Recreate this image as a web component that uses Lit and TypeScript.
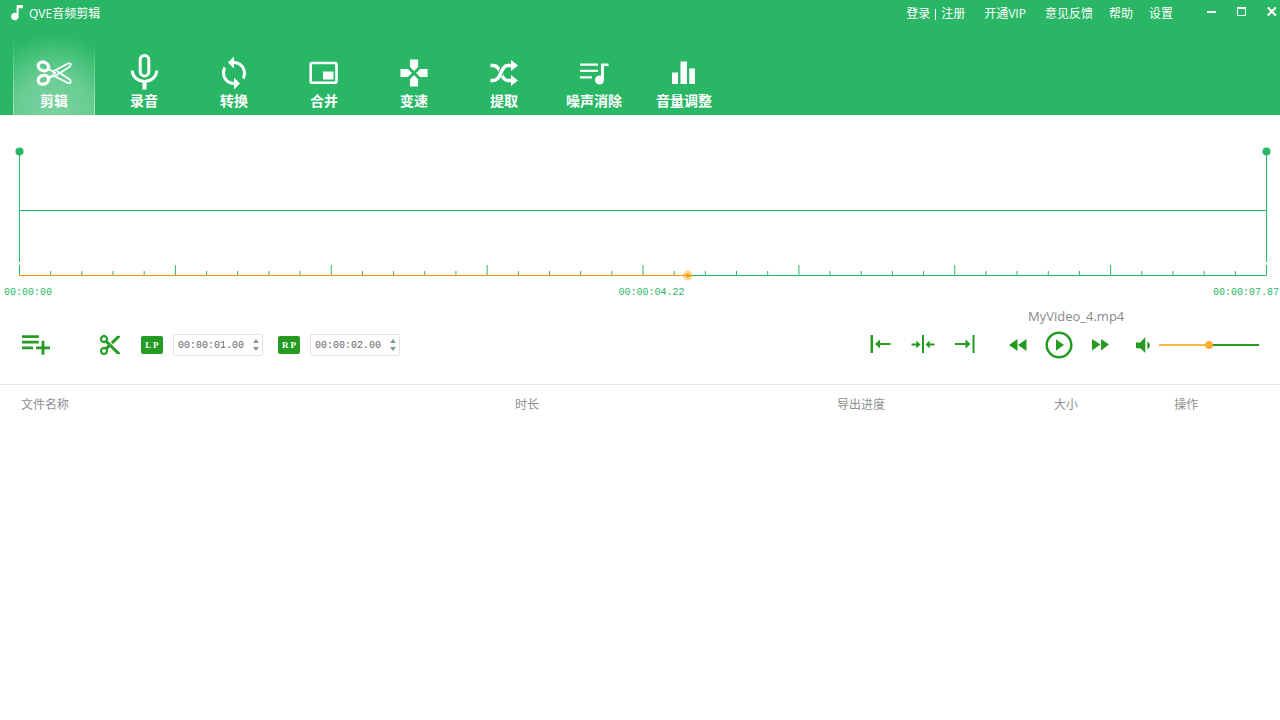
import { LitElement, html, css, svg } from "lit";
import { customElement, state } from "lit/decorators.js";

const icons = {
  note: svg`<path d="M5.6 0H12v3.2H7.6v8.2A3.8 3.8 0 1 1 5.6 8.2z"/>`,
  scissors: svg`
    <g fill="none" stroke="#fff">
      <ellipse cx="7.4" cy="11.4" rx="5.3" ry="4.3" stroke-width="3.2" transform="rotate(22 7.4 11.4)"/>
      <ellipse cx="7.4" cy="24.8" rx="5.3" ry="4.3" stroke-width="3.2" transform="rotate(-22 7.4 24.8)"/>
      <path stroke-width="1.6" stroke-linejoin="round" d="M12.5 14l4.5 2.5 15.5-8.3 2.5.8-1 2.5-14.2 9-7.3 2.5M12.5 22.5l4.5-2.5M20.8 16L34.5 25l.3 2.5-2.5.8-13.5-7"/>
      <circle cx="18.3" cy="18.3" r="1.2" stroke-width="1.2"/>
    </g>`,
  mic: svg`
    <g fill="none" stroke="#fff">
      <rect x="14.200" y=".400" width="8.600" height="20.600" rx="4.300" stroke-width="3"/>
      <path d="M6.300 15.500c0 6 5 10.900 12.200 10.900S30.700 21.500 30.700 15.500" stroke-width="3"/>
      <path d="M18.500 27v7.500" stroke-width="4"/>
    </g>`,
  sync: svg`<path transform="scale(1.5)" d="M12 4V1L8 5l4 4V6c3.310 0 6 2.690 6 6 0 1.010-.250 1.970-.700 2.800l1.460 1.460C19.540 15.030 20 13.570 20 12c0-4.420-3.580-8-8-8zm0 14c-3.310 0-6-2.690-6-6 0-1.010.250-1.970.700-2.800L5.240 7.740C4.460 8.970 4 10.430 4 12c0 4.420 3.580 8 8 8v3l4-4-4-4v3z"/>`,
  merge: svg`
    <rect x="4.700" y="8" width="25.800" height="19.800" rx="1.500" fill="none" stroke="#fff" stroke-width="2.600"/>
    <path d="M17 16.500h10.500v8H17z"/>`,
  speed: svg`<path transform="translate(1.700 1.700) scale(1.360)" d="M15 7.500V2H9v5.500l3 3 3-3zM7.500 9H2v6h5.500l3-3-3-3zM9 16.500V22h6v-5.500l-3-3-3 3zM16.500 9l-3 3 3 3H22V9h-5.500z"/>`,
  shuffle: svg`
    <g fill="none" stroke="#fff" stroke-width="3.400">
      <path d="M4.500 10.500h3c8 0 7 15 14 15h4"/>
      <path d="M4.500 25.500h3c8 0 7-15 14-15h4" stroke="#29b765" stroke-width="5.500" stroke-dasharray="0 12 10 50"/>
      <path d="M4.500 25.500h3c8 0 7-15 14-15h4"/>
    </g>
    <path d="M25 5l7 5.500-7 5.500zM25 20l7 5.500-7 5.500z"/>`,
  denoise: svg`<path transform="translate(-.5 -.5) scale(1.5)" d="M15 6H3v1.500h12V6zm0 4.100H3v1.500h12v-1.500zM3 16h8v-1.500H3V16zM17 6v8.180c-.310-.110-.650-.180-1-.180-1.660 0-3 1.340-3 3s1.340 3 3 3 3-1.340 3-3V7.600h3V6h-5z"/>`,
  volumeBars: svg`<path d="M6 17.500h6V29H6zM14.500 6.500h6.500V29h-6.500zM23.300 13.500h5.700V29h-5.700z"/>`,
  addList: svg`<path d="M14 10H2v2h12v-2zm0-4H2v2h12V6zm4 8v-4h-2v4h-4v2h4v4h2v-4h4v-2h-4zM2 16h8v-2H2v2z"/>`,
  cut: svg`<path d="M9.640 7.640c.230-.500.360-1.050.360-1.640 0-2.210-1.790-4-4-4S2 3.790 2 6s1.790 4 4 4c.590 0 1.140-.130 1.640-.360L10 12l-2.360 2.360C7.140 14.130 6.590 14 6 14c-2.210 0-4 1.790-4 4s1.790 4 4 4 4-1.790 4-4c0-.590-.130-1.140-.360-1.640L12 14l7 7h3v-1L9.640 7.640zM6 8c-1.100 0-2-.890-2-2s.900-2 2-2 2 .890 2 2-.900 2-2 2zm0 12c-1.100 0-2-.890-2-2s.900-2 2-2 2 .890 2 2-.900 2-2 2zm6-7.500c-.280 0-.500-.220-.500-.500s.220-.500.500-.500.500.220.500.500-.220.500-.500.500zM19 3l-6 6 2 2 7-7V3z" stroke="#259b24" stroke-width=".3"/>`,
  toStart: svg`<path d="M.5 1H3v18H.5zM5 10L10 5.500V9h10.500v2H10v3.500z"/>`,
  toMiddle: svg`<path d="M11 1h2v18h-2zM9.500 10.500L5.300 6.500v3H.5v2h4.800v3zM14.500 10.500l4.200-4v3h4.800v2h-4.800v3z"/>`,
  toEnd: svg`<path d="M18.500 1h2v18h-2zM16.500 10L11.500 5.500V9H1v2h10.500v3.500z"/>`,
  rewind: svg`<path d="M8.500 12V0L0 6l8.500 6zM9 6l8.500 6V0L9 6z"/>`,
  forward: svg`<path d="M1 11.500L9.500 5.500 1 0v11.500zM10 0v11.500L18 5.500 10 0z"/>`,
  play: svg`<circle cx="14" cy="14" r="12.300" fill="none" stroke="#259b24" stroke-width="2.500"/><path d="M11 8.200v11.600l8-5.800z"/>`,
  speaker: svg`<path d="M0 5.500v5.800h4.300l5 4.700V0l-5 5.500zM11.300 4.400v7.800c1.500-.700 2.700-2.200 2.700-3.900s-1.200-3.200-2.700-3.900z"/>`,
};

const tabs = [
  { label: "剪辑", icon: icons.scissors },
  { label: "录音", icon: icons.mic },
  { label: "转换", icon: icons.sync },
  { label: "合并", icon: icons.merge },
  { label: "变速", icon: icons.speed },
  { label: "提取", icon: icons.shuffle },
  { label: "噪声消除", icon: icons.denoise },
  { label: "音量调整", icon: icons.volumeBars },
];

@customElement("qve-timeline")
class QveTimeline extends LitElement {
  static styles = css`
    :host { display: block; }
    .wave { padding: 32px 14px 0 19px; }
    .plot { display: block; width: 100%; height: 134px; overflow: visible; }
    .times {
      display: grid;
      grid-template-columns: 614fr 594fr auto;
      padding: 4px 1px 0 4px;
      font: 10px/16px "Liberation Mono", monospace;
      color: #29b765;
    }
  `;

  render() {
    const ticks = Array.from({ length: 41 }, (_, i) => i);
    return html`
      <div class="wave">
        <svg class="plot" role="img" aria-label="00:00:04.22 / 00:00:07.87">
          <g transform="translate(.5 0)">
            <g stroke="#29b765">
              <line x1="0" x2="0" y1="5" y2="115" />
              <line x1="100%" x2="100%" y1="5" y2="115" />
              <line x1="0" x2="100%" y1="63.5" y2="63.5" />
              ${ticks.map((i) => svg`
                <line x1=${`${i * 2.5}%`} x2=${`${i * 2.5}%`} y1=${i % 5 ? 124 : 118} y2="128" />`)}
              <line x1="0" x2="100%" y1="128.5" y2="128.5" />
            </g>
            <line x1="0" x2="53.6%" y1="128.5" y2="128.5" stroke="#ff9800" />
            <circle cx="0" cy="4.5" r="4" fill="#29b765" />
            <circle cx="100%" cy="4.5" r="4" fill="#29b765" />
            <circle cx="53.6%" cy="128.5" r="5" fill="#ff9800" fill-opacity=".4" />
            <circle cx="53.6%" cy="128.5" r="2" fill="#ff9800" />
          </g>
        </svg>
      </div>
      <div class="times"><span>00:00:00</span><span>00:00:04.22</span><span>00:00:07.87</span></div>
    `;
  }
}

@customElement("qve-time-field")
class QveTimeField extends LitElement {
  static properties = { value: {}, label: {} };
  declare value: string;
  declare label: string;

  static styles = css`
    :host { display: block; }
    .box {
      display: flex;
      align-items: center;
      box-sizing: border-box;
      width: 90px;
      height: 22px;
      padding: 0 2px 0 4px;
      border: 1px solid #e2e2e2;
      border-radius: 2px;
      background: #fff;
    }
    .value {
      flex: 1;
      min-width: 0;
      padding: 1px 0 0;
      border: 0;
      outline: 0;
      background: none;
      font: 10px/14px "Liberation Mono", monospace;
      color: #666;
    }
    .steps { display: flex; flex-direction: column; gap: 4px; }
    .step { display: block; padding: 0; border: 0; background: none; line-height: 0; cursor: pointer; }
    .glyph { display: block; fill: #8496a0; }
  `;

  render() {
    return html`
      <div class="box">
        <input class="value" type="text" aria-label=${this.label} .value=${this.value} />
        <div class="steps">
          <button class="step" aria-label="增加"><svg class="glyph" width="8" height="4"><path d="M4 0l3 4H1z" /></svg></button>
          <button class="step" aria-label="减少"><svg class="glyph" width="8" height="4"><path d="M4 4L1 0h6z" /></svg></button>
        </div>
      </div>
    `;
  }
}

@customElement("app-root")
class AppRoot extends LitElement {
  @state() private active = 0;

  static styles = css`
    :host {
      display: flex;
      flex-direction: column;
      min-height: 100vh;
      background: #fff;
      font: 12px/16px "Open Sans", "Noto Sans CJK SC", sans-serif;
    }
    svg { display: block; overflow: visible; }
    button { padding: 0; border: 0; background: none; font: inherit; color: inherit; cursor: pointer; }
    .header { background: #29b765; color: #fff; }
    .titlebar { display: flex; align-items: flex-start; padding: 5px 3px 0 11px; height: 21px; }
    .brand { display: flex; align-items: flex-start; gap: 6px; margin-right: auto; }
    .title, .menu { padding-top: 1px; }
    .menu { display: flex; gap: 16px; margin-right: 34px; }
    .account { display: flex; gap: 5px; }
    .bar { align-self: center; width: 1px; height: 11px; background: #fff; }
    .link { color: inherit; text-decoration: none; white-space: nowrap; }
    .vip { margin: 0 3px; }
    .window { display: flex; gap: 20px; padding-top: 1px; }
    .tabs { display: flex; gap: 8px; padding: 7px 13px 0; }
    .tab {
      display: flex;
      flex-direction: column;
      align-items: center;
      box-sizing: border-box;
      width: 82px;
      height: 82px;
      padding-top: 22px;
      font-size: 14px;
      line-height: 20px;
      font-weight: 700;
      white-space: nowrap;
    }
    .active {
      background:
        linear-gradient(#fff0, #ffffff80) left / 1px 100% no-repeat,
        linear-gradient(#fff0, #ffffff80) right / 1px 100% no-repeat,
        radial-gradient(ellipse 90% 100% at 50% 100%, #ffffff60, #ffffff4d 50%, #fff0);
    }
    .toolbar {
      display: flex;
      justify-content: space-between;
      align-items: flex-end;
      padding: 7px 21px 25px 22px;
      border-bottom: 1px solid #e8e8e8;
      color: #259b24;
      fill: #259b24;
    }
    .group { display: flex; align-items: center; height: 28px; }
    .cut { margin: 0 20px 0 49px; }
    .mark {
      width: 22px;
      height: 18px;
      margin-right: 10px;
      border-radius: 2px;
      background: #259b24;
      color: #fff;
      font: 700 9px/18px "Liberation Serif", serif;
      text-align: center;
    }
    .second { margin-left: 15px; }
    .right { display: flex; align-items: flex-end; gap: 33px; }
    .jumps { gap: 19px; padding-bottom: 1px; }
    .playback { gap: 18px; }
    .name { padding-left: 19px; margin-bottom: 7px; font-size: 13px; line-height: 16px; color: #888; }
    .sound { display: flex; align-items: center; gap: 8px; margin-left: 9px; }
    .volume { width: 100px; height: 16px; margin: 0; appearance: none; background: none; }
    .volume::-webkit-slider-runnable-track {
      height: 2px;
      background: linear-gradient(90deg, #ffb340 50%, #259b24 50%);
    }
    .volume::-webkit-slider-thumb {
      appearance: none;
      width: 8px;
      height: 8px;
      margin-top: -3px;
      border-radius: 50%;
      background: #ffad33;
    }
    .files { width: 100%; table-layout: fixed; border-collapse: collapse; color: #909090; }
    .col-name { width: 38.6%; }
    .col-time { width: 25.15%; }
    .col-progress { width: 16.95%; }
    .col-size { width: 9.4%; }
    .cell { padding: 12px 0 12px 21px; font-weight: 400; text-align: left; }
  `;

  render() {
    return html`
      <header class="header">
        <div class="titlebar">
          <div class="brand">
            <svg width="12" height="16" fill="#fff">${icons.note}</svg>
            <span class="title">QVE音频剪辑</span>
          </div>
          <nav class="menu">
            <span class="account"><a class="link" href="#login">登录</a><i class="bar"></i><a class="link" href="#register">注册</a></span>
            <a class="link vip" href="#vip">开通VIP</a>
            <a class="link" href="#feedback">意见反馈</a>
            <a class="link" href="#help">帮助</a>
            <a class="link" href="#settings">设置</a>
          </nav>
          <div class="window">
            <button aria-label="最小化"><svg width="10" height="12"><path d="M0 5h9v2H0z" fill="#fff" /></svg></button>
            <button aria-label="最大化"><svg width="10" height="12"><path d="M.5 2v7.500h8V2z" fill="none" stroke="#fff" /><path d="M0 1h9v2H0z" fill="#fff" /></svg></button>
            <button aria-label="关闭"><svg width="10" height="12"><path d="M.8 1.500l8 8M8.800 1.500l-8 8" stroke="#fff" stroke-width="2.200" /></svg></button>
          </div>
        </div>
        <nav class="tabs">
          ${tabs.map((tab, i) => html`
            <button class="tab ${i === this.active ? "active" : ""}" @click=${() => (this.active = i)}>
              <svg width="36" height="36" fill="#fff">${tab.icon}</svg>
              <span>${tab.label}</span>
            </button>`)}
        </nav>
      </header>

      <qve-timeline></qve-timeline>

      <section class="toolbar">
        <div class="group">
          <button aria-label="添加文件"><svg width="28" height="20" viewBox="2 6 20 14">${icons.addList}</svg></button>
          <button class="cut" aria-label="剪切"><svg width="22" height="22" viewBox="1 1 22 22">${icons.cut}</svg></button>
          <button class="mark">L P</button>
          <qve-time-field label="开始时间" value="00:00:01.00"></qve-time-field>
          <button class="mark second">R P</button>
          <qve-time-field label="结束时间" value="00:00:02.00"></qve-time-field>
        </div>
        <div class="right">
          <div class="group jumps">
            <button aria-label="跳到开头"><svg width="22" height="20">${icons.toStart}</svg></button>
            <button aria-label="跳到中间"><svg width="24" height="20">${icons.toMiddle}</svg></button>
            <button aria-label="跳到结尾"><svg width="22" height="20">${icons.toEnd}</svg></button>
          </div>
          <div>
            <div class="name">MyVideo_4.mp4</div>
            <div class="group playback">
              <button aria-label="快退"><svg width="18" height="12">${icons.rewind}</svg></button>
              <button aria-label="播放"><svg width="28" height="28">${icons.play}</svg></button>
              <button aria-label="快进"><svg width="18" height="12">${icons.forward}</svg></button>
              <div class="sound">
                <svg width="15" height="16">${icons.speaker}</svg>
                <input class="volume" type="range" min="0" max="100" value="50" aria-label="音量" />
              </div>
            </div>
          </div>
        </div>
      </section>

      <table class="files">
        <colgroup>
          <col class="col-name" /><col class="col-time" /><col class="col-progress" /><col class="col-size" /><col />
        </colgroup>
        <thead>
          <tr>${["文件名称", "时长", "导出进度", "大小", "操作"].map((t) => html`<th class="cell" scope="col">${t}</th>`)}</tr>
        </thead>
      </table>
    `;
  }
}
